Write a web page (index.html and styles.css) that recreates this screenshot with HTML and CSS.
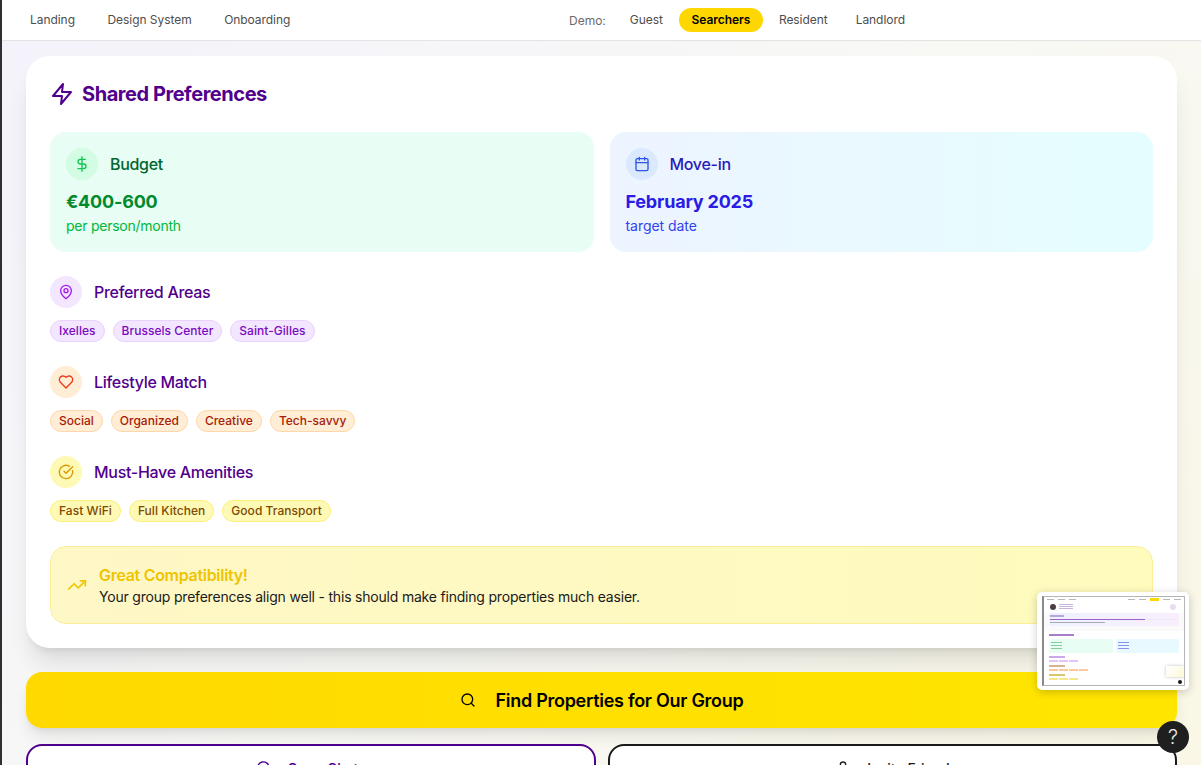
FILE: index.html
```html
<!DOCTYPE html>
<html lang="en">

<head>
    <meta charset="UTF-8" />
    <meta name="viewport" content="width=device-width, initial-scale=1" />
    <title>Shared Preferences</title>
    <link rel="stylesheet" href="styles.css">
</head>

<body>
    <nav class="topbar">
        <div class="topbar-left">
            <a class="nav-link" href="#">Landing</a>
            <a class="nav-link" href="#">Design System</a>
            <a class="nav-link" href="#">Onboarding</a>
        </div>
        <div class="topbar-demo">
            <span class="demo-label">Demo:</span>
            <a class="nav-link" href="#">Guest</a>
            <a class="nav-link active" href="#">Searchers</a>
            <a class="nav-link" href="#">Resident</a>
            <a class="nav-link" href="#">Landlord</a>
        </div>
    </nav>

    <main class="page">
        <section class="card">
            <h2 class="card-title">
                <svg class="title-icon" viewBox="0 0 24 24"><path d="M13 2 3 14h9l-1 8 10-12h-9l1-8z" /></svg>
                Shared Preferences
            </h2>

            <div class="tiles">
                <div class="tile tile-green">
                    <div class="tile-head">
                        <span class="round round-green">
                            <svg viewBox="0 0 24 24"><path d="M12 1v22M17 5H9.500a3.500 3.500 0 0 0 0 7h5a3.500 3.500 0 0 1 0 7H6" /></svg>
                        </span>
                        <span class="tile-name">Budget</span>
                    </div>
                    <div class="tile-value">€400-600</div>
                    <div class="tile-note">per person/month</div>
                </div>
                <div class="tile tile-blue">
                    <div class="tile-head">
                        <span class="round round-blue">
                            <svg viewBox="0 0 24 24"><rect x="3" y="4" width="18" height="18" rx="2" /><path d="M16 2v4M8 2v4M3 10h18" /></svg>
                        </span>
                        <span class="tile-name">Move-in</span>
                    </div>
                    <div class="tile-value">February 2025</div>
                    <div class="tile-note">target date</div>
                </div>
            </div>

            <div class="pref">
                <div class="pref-head">
                    <span class="round round-purple">
                        <svg viewBox="0 0 24 24"><path d="M20 10c0 6-8 12-8 12s-8-6-8-12a8 8 0 0 1 16 0z" /><circle cx="12" cy="10" r="3" /></svg>
                    </span>
                    <h3>Preferred Areas</h3>
                </div>
                <div class="tags">
                    <span class="tag tag-purple">Ixelles</span>
                    <span class="tag tag-purple">Brussels Center</span>
                    <span class="tag tag-purple">Saint-Gilles</span>
                </div>
            </div>

            <div class="pref">
                <div class="pref-head">
                    <span class="round round-orange">
                        <svg viewBox="0 0 24 24"><path d="M19 14c1.500-1.500 3-3.200 3-5.500A5.500 5.500 0 0 0 16.500 3c-1.800 0-3 .5-4.500 2-1.500-1.500-2.700-2-4.500-2A5.500 5.500 0 0 0 2 8.500c0 2.300 1.500 4 3 5.500l7 7z" /></svg>
                    </span>
                    <h3>Lifestyle Match</h3>
                </div>
                <div class="tags">
                    <span class="tag tag-orange">Social</span>
                    <span class="tag tag-orange">Organized</span>
                    <span class="tag tag-orange">Creative</span>
                    <span class="tag tag-orange">Tech-savvy</span>
                </div>
            </div>

            <div class="pref">
                <div class="pref-head">
                    <span class="round round-yellow">
                        <svg viewBox="0 0 24 24"><path d="M21.800 10A10 10 0 1 1 17 3.300" /><path d="m9 11 3 3L22 4" /></svg>
                    </span>
                    <h3>Must-Have Amenities</h3>
                </div>
                <div class="tags">
                    <span class="tag tag-yellow">Fast WiFi</span>
                    <span class="tag tag-yellow">Full Kitchen</span>
                    <span class="tag tag-yellow">Good Transport</span>
                </div>
            </div>

            <div class="notice">
                <svg class="notice-icon" viewBox="0 0 24 24"><path d="M22 7 13.500 15.500l-5-5L2 17" /><path d="M16 7h6v6" /></svg>
                <div>
                    <div class="notice-title">Great Compatibility!</div>
                    <div class="notice-text">Your group preferences align well - this should make finding properties much easier.</div>
                </div>
            </div>
        </section>

        <a class="btn-find" href="#">
            <svg viewBox="0 0 24 24"><circle cx="11" cy="11" r="8" /><path d="m21 21-4.300-4.300" /></svg>
            Find Properties for Our Group
        </a>

        <div class="btn-row">
            <a class="btn-outline btn-purple" href="#">
                <svg viewBox="0 0 24 24"><path d="M21 11.500a8.400 8.400 0 0 1-12.300 7.500L3 21l2-5.700A8.500 8.500 0 1 1 21 11.500z" /></svg>
                Open Chat
            </a>
            <a class="btn-outline btn-dark" href="#">
                <svg viewBox="0 0 24 24"><circle cx="12" cy="7" r="4" /><path d="M4 21v-2a6 6 0 0 1 6-6h4a6 6 0 0 1 6 6v2" /></svg>
                Invite Friends
            </a>
        </div>
    </main>

    <!-- miniatura da pagina -->
    <div class="mini">
        <div class="mini-shot">
            <div class="mini-nav">
                <i></i><i></i><i></i>
                <span class="mini-gap"></span>
                <i></i><i></i><i class="on"></i><i></i><i></i>
            </div>
            <div class="mini-profile">
                <b></b>
                <div class="mini-lines"><i></i><i></i><i></i></div>
                <em></em>
            </div>
            <div class="mini-banner">
                <div class="mini-banner-title"></div>
                <div class="mini-bar"><i></i></div>
                <div class="mini-banner-text"></div>
            </div>
            <div class="mini-card">
                <div class="mini-title"></div>
                <div class="mini-tiles">
                    <div class="mt-green"><i></i><i></i><i></i></div>
                    <div class="mt-blue"><i></i><i></i><i></i></div>
                </div>
                <div class="mini-head mh-purple"></div>
                <div class="mini-tags mr-purple"><i></i><i></i><i></i></div>
                <div class="mini-head mh-orange"></div>
                <div class="mini-tags mr-orange"><i></i><i></i><i></i><i></i></div>
                <div class="mini-head mh-yellow"></div>
                <div class="mini-tags mr-yellow"><i></i><i></i><i></i></div>
            </div>
            <div class="mini-mini"></div>
            <div class="mini-help"></div>
        </div>
    </div>

    <button class="help">?</button>
</body>

</html>
```

FILE: styles.css
```css
* {
    box-sizing: border-box;
}

html,
body {
    height: 100%;
}

body {
    margin: 0;
    height: 765px;
    overflow: hidden;
    font-family: Inter, "Liberation Sans", sans-serif;
    color: #1a1a1a;
    background: linear-gradient(135deg, #f4f2fb 0%, #f8f8f5 50%, #faf7e6 100%);
    border-left: 2px solid #2e2e33;
}

a {
    text-decoration: none;
}

svg {
    fill: none;
    stroke: currentColor;
    stroke-width: 2;
    stroke-linecap: round;
    stroke-linejoin: round;
}

.topbar {
    height: 41px;
    display: flex;
    align-items: center;
    background-color: #fff;
    border-bottom: 1px solid #e3e3e3;
    padding: 0 16px;
    position: relative;
}

.topbar-left {
    display: flex;
    gap: 8.5px;
}

.topbar-demo {
    display: flex;
    align-items: center;
    gap: 4px;
    position: absolute;
    left: 567px;
    top: 8px;
}

.nav-link {
    display: block;
    font-size: 12px;
    line-height: 24px;
    height: 24px;
    padding: 0 12px;
    color: #4d4d4d;
    border-radius: 12px;
    letter-spacing: -0.05px;
}

.nav-link.active {
    min-width: 84px;
    text-align: center;
    background-color: #ffd700;
    color: #000;
    font-weight: 600;
}

.demo-label {
    font-size: 12px;
    color: #6b6b6b;
    margin-right: 8px;
}

.page {
    padding: 15px 24px 0;
}

.card {
    height: 592px;
    background-color: #fff;
    border-radius: 24px;
    padding: 24px;
    box-shadow: 0 20px 25px -5px rgba(0, 0, 0, 0.1), 0 8px 10px -6px rgba(0, 0, 0, 0.1);
}

.card-title {
    display: flex;
    align-items: center;
    gap: 8px;
    height: 28px;
    margin: 0 0 24px;
    font-size: 20px;
    font-weight: 700;
    letter-spacing: -0.45px;
    color: #50008c;
}

.title-icon {
    width: 24px;
    height: 24px;
}

.tiles {
    display: grid;
    grid-template-columns: 1fr 1fr;
    gap: 16px;
    width: 1103px;
}

.tile {
    height: 120px;
    padding: 16px;
    border-radius: 16px;
}

.tile-green {
    background-color: #e8fdf3;
    color: #008a2e;
}

.tile-blue {
    background: linear-gradient(90deg, #edf4ff, #e6fdff 85%);
    color: #2a1be6;
}

.tile-head,
.pref-head {
    display: flex;
    align-items: center;
    gap: 12px;
}

.round {
    width: 32px;
    height: 32px;
    border-radius: 50%;
    display: flex;
    align-items: center;
    justify-content: center;
    flex: none;
}

.round svg {
    width: 16px;
    height: 16px;
}

.round-green {
    background-color: #d2fce3;
    color: #13c552;
}

.round-blue {
    background-color: #dbe9fe;
    color: #2f54eb;
}

.round-purple {
    background-color: #f3e6ff;
    color: #a21cf0;
}

.round-orange {
    background-color: #ffedd5;
    color: #f03a1a;
}

.round-yellow {
    background-color: #fef9b5;
    color: #d99a00;
}

.tile-name {
    font-size: 16px;
    font-weight: 500;
    letter-spacing: -0.3px;
}

.tile-green .tile-name {
    color: #016630;
}

.tile-blue .tile-name {
    color: #2a1bb8;
}

.tile-value {
    font-size: 18px;
    font-weight: 700;
    line-height: 28px;
    letter-spacing: -0.2px;
    margin-top: 8px;
}

.tile-note {
    font-size: 14px;
    line-height: 20px;
    letter-spacing: -0.25px;
}

.tile-green .tile-note {
    color: #00b83a;
}

.tile-blue .tile-note {
    color: #3342f0;
    letter-spacing: -0.05px;
}

.pref {
    margin-top: 24px;
}

.pref-head h3 {
    margin: 0;
    font-size: 16px;
    font-weight: 500;
    letter-spacing: -0.3px;
    color: #50008c;
}

.tags {
    display: flex;
    gap: 8px;
    margin-top: 12px;
}

.tag {
    font-size: 12px;
    font-weight: 500;
    line-height: 20px;
    height: 22px;
    padding: 0 8px;
    border-radius: 11px;
    border: 1px solid;
}

.tag-purple {
    background-color: #f3e6ff;
    border-color: #e9d2fd;
    color: #7a0bc0;
    letter-spacing: 0.04px;
}

.tag-orange {
    background-color: #ffedd5;
    border-color: #fed7aa;
    color: #a81c08;
}

.tag-yellow {
    background-color: #fef9b5;
    border-color: #fdf07a;
    color: #7c4a03;
    letter-spacing: 0.04px;
}

.notice {
    display: flex;
    align-items: center;
    gap: 12px;
    height: 78px;
    margin-top: 24px;
    width: 1103px;
    padding: 0 16px;
    border: 1px solid #fcee96;
    border-radius: 16px;
    background: linear-gradient(90deg, #fef7c6, #fefbbd);
}

.notice-icon {
    width: 20px;
    height: 20px;
    color: #f0c800;
    flex: none;
}

.notice-title {
    font-size: 16px;
    font-weight: 600;
    line-height: 24px;
    letter-spacing: -0.3px;
    color: #efc400;
}

.notice-text {
    font-size: 14px;
    line-height: 20px;
    letter-spacing: -0.2px;
    color: #1a1a1a;
}

.btn-find {
    display: flex;
    align-items: center;
    justify-content: center;
    gap: 20px;
    height: 56px;
    margin-top: 24px;
    border-radius: 16px;
    font-size: 18px;
    font-weight: 600;
    letter-spacing: -0.28px;
    color: #000;
    background: linear-gradient(90deg, #ffd900, #ffe600);
    box-shadow: 0 10px 15px -3px rgba(0, 0, 0, 0.1), 0 4px 6px -4px rgba(0, 0, 0, 0.1);
}

.btn-find svg {
    width: 16px;
    height: 16px;
}

.btn-row {
    display: grid;
    grid-template-columns: 1fr 1fr;
    gap: 12px;
    margin-top: 16px;
}

.btn-outline {
    display: flex;
    align-items: center;
    justify-content: center;
    gap: 16px;
    height: 48px;
    background-color: #fff;
    border: 2px solid;
    border-radius: 16px;
    font-size: 14px;
    font-weight: 500;
}

.btn-outline svg {
    width: 16px;
    height: 16px;
}

.btn-purple {
    color: #50008c;
    border-color: #50008c;
    padding-right: 8px;
}

.btn-dark {
    color: #1a1a1a;
    border-color: #1a1a1a;
    padding-left: 8px;
}

/* miniatura */
.mini {
    position: absolute;
    left: 1037px;
    top: 592px;
    width: 152px;
    height: 98px;
    padding: 4px 4px 4px 5px;
    background-color: #fff;
    border-radius: 5px;
    box-shadow: 0 2px 8px rgba(0, 0, 0, 0.2);
}

.mini-shot {
    position: relative;
    height: 90px;
    overflow: hidden;
    border-top: 1px solid #b5b5b5;
    border-bottom: 1px solid #b5b5b5;
    border-left: 2px solid #8a8a8a;
    border-right: 1px solid #b5b5b5;
    background-color: #fafafa;
    filter: blur(0.35px);
}

.mini-shot i {
    display: block;
}

.mini-nav {
    display: flex;
    align-items: center;
    gap: 4px;
    height: 4px;
    padding: 0 3px;
    background-color: #fff;
}

.mini-nav i {
    width: 9px;
    height: 1px;
    background-color: #b8b8b8;
}

.mini-nav i.on {
    height: 3px;
    width: 11px;
    background-color: #ffd700;
}

.mini-gap {
    width: 55px;
}

.mini-profile {
    display: flex;
    align-items: center;
    gap: 3px;
    height: 12px;
    padding: 0 6px;
    background-color: #fff;
}

.mini-profile b {
    width: 6px;
    height: 6px;
    border-radius: 50%;
    background-color: #4a3f45;
}

.mini-lines {
    flex: 1;
}

.mini-lines i {
    width: 14px;
    height: 1px;
    margin-bottom: 1px;
    background-color: #c9b4dc;
}

.mini-profile em {
    width: 6px;
    height: 6px;
    margin-right: 2px;
    border-radius: 50%;
    background-color: #eadcf3;
}

.mini-banner {
    height: 13px;
    margin: 0 5px;
    padding: 2px 1px;
    border-radius: 2px;
    background: linear-gradient(90deg, #eef2ff, #f8eefc);
}

.mini-banner-title {
    width: 14px;
    height: 2px;
    background-color: #b9a6d8;
}

.mini-bar {
    height: 1px;
    margin-top: 2px;
    background-color: #efe6f7;
}

.mini-bar i {
    width: 95px;
    height: 1px;
    background-color: #9a63c9;
}

.mini-banner-text {
    width: 55px;
    height: 1px;
    margin-top: 2px;
    background-color: #a9a9b5;
}

.mini-card {
    height: 60px;
    margin-top: 5px;
    padding: 3px 5px;
    background-color: #fff;
}

.mini-title {
    width: 25px;
    height: 2px;
    background-color: #a77fc9;
}

.mini-tiles {
    display: grid;
    grid-template-columns: 1fr 1fr;
    gap: 3px;
    margin-top: 3px;
}

.mini-tiles div {
    height: 14px;
    padding: 3px 2px;
    border-radius: 2px;
}

.mini-tiles i {
    width: 11px;
    height: 1px;
    margin-bottom: 2px;
}

.mt-green {
    background-color: #e8fdf3;
}

.mt-green i {
    background-color: #7fcf9b;
}

.mt-blue {
    background-color: #e8f9ff;
}

.mt-blue i {
    background-color: #8f8ff0;
}

.mini-head {
    width: 16px;
    height: 2px;
    margin-top: 3px;
}

.mh-purple {
    background-color: #cba9ea;
}

.mh-orange {
    background-color: #d8b38f;
}

.mh-yellow {
    background-color: #d9c86a;
}

.mini-tags {
    display: flex;
    gap: 1px;
    margin-top: 2px;
}

.mini-tags i {
    width: 9px;
    height: 2px;
}

.mr-purple i {
    background-color: #e3c4f7;
}

.mr-orange i {
    background-color: #fbc99a;
}

.mr-yellow i {
    background-color: #f5e88a;
}

.mini-mini {
    position: absolute;
    right: 0;
    bottom: 8px;
    width: 18px;
    height: 11px;
    background: linear-gradient(135deg, #fff, #fdf9d8);
    box-shadow: 0 0 3px rgba(0, 0, 0, 0.25);
}

.mini-help {
    position: absolute;
    right: 2px;
    bottom: 1px;
    width: 4px;
    height: 4px;
    border-radius: 50%;
    background-color: #1a1a1a;
}

.help {
    position: absolute;
    left: 1157px;
    top: 721px;
    width: 32px;
    height: 32px;
    padding: 0;
    border: none;
    border-radius: 50%;
    background-color: #1f1f1f;
    color: #e8e8e8;
    font-family: Inter, "Liberation Sans", sans-serif;
    font-size: 20px;
    font-weight: 300;
}
```
